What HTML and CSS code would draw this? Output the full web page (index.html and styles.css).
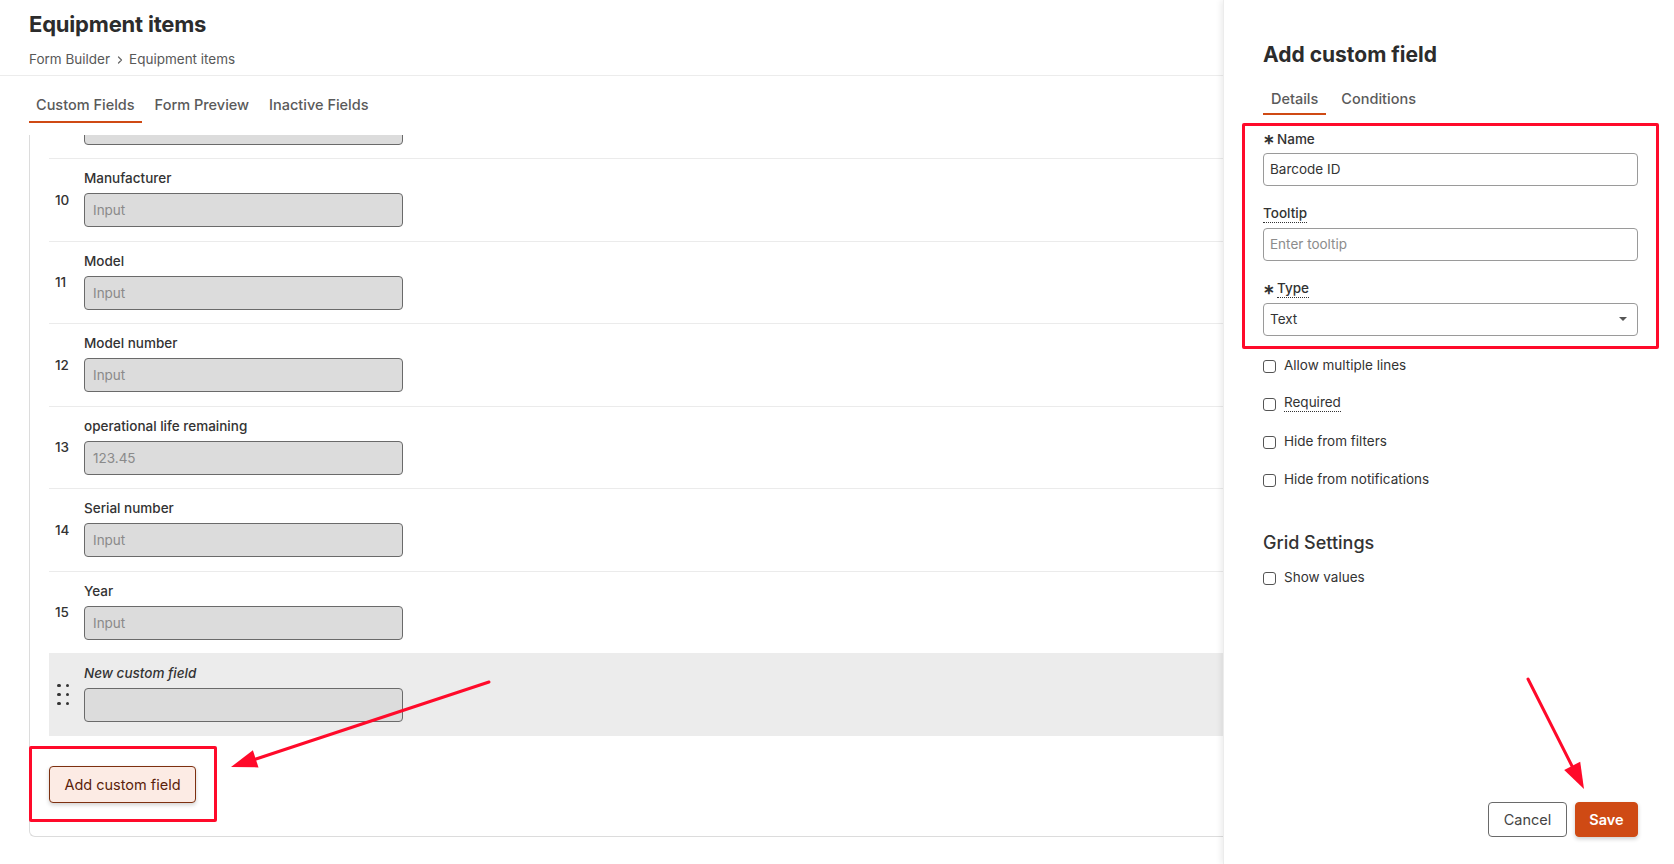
FILE: index.html
```html
<!DOCTYPE html>
<html lang="en">
<head>
<meta charset="utf-8">
<title>Equipment items</title>
<link rel="stylesheet" href="styles.css">
</head>
<body>
<div class="page">
  <main class="main">
    <header class="header">
      <h1 class="title">Equipment items</h1>
      <nav class="crumbs"><span>Form Builder</span><svg class="chev" width="12" height="12" viewBox="0 0 12 12"><path d="M4.5 3 L7.5 6 L4.5 9" fill="none" stroke="#666" stroke-width="1.2" stroke-linecap="round" stroke-linejoin="round"/></svg><span>Equipment items</span></nav>
    </header>
    <div class="tabs">
      <span class="tab active">Custom Fields</span>
      <span class="tab">Form Preview</span>
      <span class="tab">Inactive Fields</span>
    </div>
    <section class="panel">
      <div class="list">
        <div class="row row-partial"><span class="num"></span><div class="field"><div class="inp"></div></div></div>
        <div class="row"><span class="num">10</span><div class="field"><label class="lbl">Manufacturer</label><div class="inp">Input</div></div></div>
        <div class="row"><span class="num">11</span><div class="field"><label class="lbl">Model</label><div class="inp">Input</div></div></div>
        <div class="row"><span class="num">12</span><div class="field"><label class="lbl">Model number</label><div class="inp">Input</div></div></div>
        <div class="row"><span class="num">13</span><div class="field"><label class="lbl">operational life remaining</label><div class="inp">123.45</div></div></div>
        <div class="row"><span class="num">14</span><div class="field"><label class="lbl">Serial number</label><div class="inp">Input</div></div></div>
        <div class="row"><span class="num">15</span><div class="field"><label class="lbl">Year</label><div class="inp">Input</div></div></div>
        <div class="row row-new">
          <span class="num"><span class="grip"><i></i><i></i><i></i><i></i><i></i><i></i></span></span>
          <div class="field"><label class="lbl lbl-new">New custom field</label><div class="inp"></div></div>
        </div>
      </div>
      <div class="add-wrap"><button class="btn-add">Add custom field</button></div>
    </section>
  </main>

  <aside class="drawer">
    <h2 class="d-title">Add custom field</h2>
    <div class="d-tabs">
      <span class="d-tab active">Details</span>
      <span class="d-tab">Conditions</span>
    </div>
    <div class="d-form">
      <div class="d-field">
        <div class="d-lbl"><span class="req">&#x2217;</span>Name</div>
        <div class="d-inp">Barcode ID</div>
      </div>
      <div class="d-field">
        <div class="d-lbl"><span class="dotted">Tooltip</span></div>
        <div class="d-inp ph">Enter tooltip</div>
      </div>
      <div class="d-field">
        <div class="d-lbl"><span class="req">&#x2217;</span><span class="dotted">Type</span></div>
        <div class="d-inp d-select">Text<span class="caret"></span></div>
      </div>
    </div>
    <div class="checks">
      <div class="chk"><span class="box"></span><span>Allow multiple lines</span></div>
      <div class="chk"><span class="box"></span><span class="dotted">Required</span></div>
      <div class="chk"><span class="box"></span><span>Hide from filters</span></div>
      <div class="chk"><span class="box"></span><span>Hide from notifications</span></div>
    </div>
    <h3 class="grid-title">Grid Settings</h3>
    <div class="chk"><span class="box"></span><span>Show values</span></div>
    <div class="d-actions">
      <button class="btn-cancel">Cancel</button>
      <button class="btn-save">Save</button>
    </div>
  </aside>

  <div class="mark mark-left"></div>
  <div class="mark mark-right"></div>
  <svg class="arrows" width="1674" height="864" viewBox="0 0 1674 864">
    <line x1="489" y1="682" x2="256" y2="759" stroke="#ff0a2a" stroke-width="3" stroke-linecap="round"/>
    <polygon points="231,767 258.5,767.4 252.9,750.3" fill="#ff0a2a"/>
    <line x1="1528" y1="679" x2="1572" y2="766" stroke="#ff0a2a" stroke-width="3" stroke-linecap="round"/>
    <polygon points="1584,789 1564.2,769.9 1580.2,761.7" fill="#ff0a2a"/>
  </svg>
</div>
</body>
</html>
```

FILE: styles.css
```css
* { box-sizing: border-box; }
html, body { margin: 0; padding: 0; }
body {
  font-family: "Inter", "Liberation Sans", sans-serif;
  color: #333;
  background: #fff;
  width: 1674px;
  height: 864px;
  overflow: hidden;
}
.page { position: relative; width: 1674px; height: 864px; }

/* main */
.main { width: 100%; height: 100%; }
.header {
  padding: 10px 29px 6px;
  border-bottom: 1px solid #ececec;
}
.title {
  margin: 0;
  font-size: 22px;
  line-height: 28px;
  font-weight: 700;
  color: #2c2c2c;
  letter-spacing: -0.2px;
}
.crumbs {
  margin-top: 11px;
  font-size: 13.5px;
  line-height: 20px;
  color: #585858;
  display: flex;
  align-items: center;
}
.chev { margin: 1px 3px 0 4px; }

.tabs {
  display: flex;
  padding-left: 29px;
  gap: 6px;
}
.tab {
  padding: 19px 7px 6px;
  font-size: 14.5px;
  line-height: 20px;
  font-weight: 500;
  color: #5a5a5a;
  border-bottom: 2px solid transparent;
}
.tab.active { border-bottom-color: #cf4a14; }

.panel {
  margin: 12px 0 0 29px;
  height: 702px;
  border-left: 1px solid #dcdcdc;
  border-bottom: 1px solid #dcdcdc;
  border-bottom-left-radius: 6px;
  overflow: hidden;
  padding-left: 19px;
}
.list { margin-top: -59.5px; }
.row {
  height: 82.5px;
  border-top: 1px solid #ebebeb;
  display: flex;
  align-items: flex-start;
  padding-top: 9px;
}
.row-partial { border-top: none; padding-top: 35px; }
.num {
  width: 35px;
  padding-left: 6px;
  font-size: 13.5px;
  font-weight: 500;
  color: #333;
  align-self: center;
  margin-top: -9px;
}
.field { display: flex; flex-direction: column; }
.lbl {
  font-size: 13.5px;
  line-height: 20px;
  font-weight: 500;
  color: #333;
  margin-bottom: 5px;
}
.inp {
  width: 319px;
  height: 34px;
  background: #dcdcdc;
  border: 1px solid #6a6a6a;
  border-radius: 4px;
  padding-left: 8px;
  font-size: 13.5px;
  line-height: 32px;
  color: #8a8a8a;
}
.row-new { background: #ececec; border-top: none; padding-top: 10px; }
.row-new .num { margin-top: -10px; }
.lbl-new { font-style: italic; }
.grip {
  display: grid;
  grid-template-columns: 3.5px 3.5px;
  column-gap: 5px;
  row-gap: 5.5px;
  margin-left: 2px;
}
.grip i { width: 3.5px; height: 3.5px; border-radius: 50%; background: #333; display: block; }

.add-wrap { padding-top: 30px; }
.btn-add {
  font-family: inherit;
  font-size: 14.5px;
  color: #5a220a;
  background: #fcebe4;
  border: 1px solid #7d3010;
  border-radius: 4px;
  height: 37px;
  width: 147px;
  box-shadow: 0 2px 4px rgba(0,0,0,0.18);
  padding: 0;
}

/* drawer */
.drawer {
  position: absolute;
  top: 0;
  right: 0;
  width: 451px;
  height: 864px;
  background: #fff;
  box-shadow: -2px 0 6px rgba(0,0,0,0.08);
  border-left: 1px solid #ececec;
  padding: 41px 36px 0 39px;
}
.d-title {
  margin: 0;
  font-size: 21px;
  line-height: 28px;
  font-weight: 700;
  color: #2c2c2c;
}
.d-tabs { display: flex; gap: 7px; margin-top: 20px; }
.d-tab {
  padding: 0 8px 4px;
  font-size: 14.5px;
  line-height: 20px;
  font-weight: 500;
  color: #5a5a5a;
  border-bottom: 2px solid transparent;
}
.d-tab.active { border-bottom-color: #cf4a14; }

.d-form { margin-top: 14px; }
.d-field { margin-bottom: 18px; }
.d-lbl {
  height: 20px;
  font-size: 13.5px;
  line-height: 20px;
  font-weight: 500;
  color: #333;
  margin-bottom: 4px;
  display: flex;
  align-items: center;
}
.req { font-size: 14px; margin-right: 2px; color: #333; font-weight: 700; }
.dotted { border-bottom: 1px dotted #333; line-height: 17px; }
.d-inp {
  height: 33px;
  border: 1px solid #9a9a9a;
  border-radius: 4px;
  padding-left: 6px;
  font-size: 13.5px;
  line-height: 31px;
  color: #333;
  position: relative;
}
.d-inp.ph { color: #8c8c8c; }
.caret {
  position: absolute;
  right: 10px;
  top: 13px;
  width: 0; height: 0;
  border-left: 4px solid transparent;
  border-right: 4px solid transparent;
  border-top: 4px solid #555;
}
.checks { margin-top: -8px; }
.chk {
  display: flex;
  align-items: center;
  gap: 8px;
  height: 38px;
  font-size: 13.5px;
  color: #333;
}
.box {
  width: 13px; height: 13px;
  border: 1.3px solid #555;
  border-radius: 3px;
  margin-top: 3px;
}
.grid-title {
  margin: 32px 0 2px;
  font-size: 18px;
  line-height: 26px;
  font-weight: 500;
  color: #333;
}
.d-actions {
  position: absolute;
  right: 36px;
  bottom: 27px;
  display: flex;
  gap: 8px;
}
.btn-cancel, .btn-save {
  font-family: inherit;
  font-size: 14.5px;
  height: 35px;
  border-radius: 4px;
  padding: 0;
}
.btn-cancel {
  width: 79px;
  background: #fff;
  border: 1px solid #6a6a6a;
  color: #444;
}
.btn-save {
  width: 63px;
  background: #cf4a14;
  border: 1px solid #cf4a14;
  color: #fff;
  font-weight: 600;
  box-shadow: 0 2px 4px rgba(0,0,0,0.2);
}

/* annotations */
.mark {
  position: absolute;
  border: 3px solid #ff0a2a;
  border-radius: 2px;
  pointer-events: none;
}
.mark-left { left: 29px; top: 746px; width: 188px; height: 76px; }
.mark-right { left: 1242px; top: 123px; width: 417px; height: 226px; }
.arrows { position: absolute; left: 0; top: 0; pointer-events: none; }
```
